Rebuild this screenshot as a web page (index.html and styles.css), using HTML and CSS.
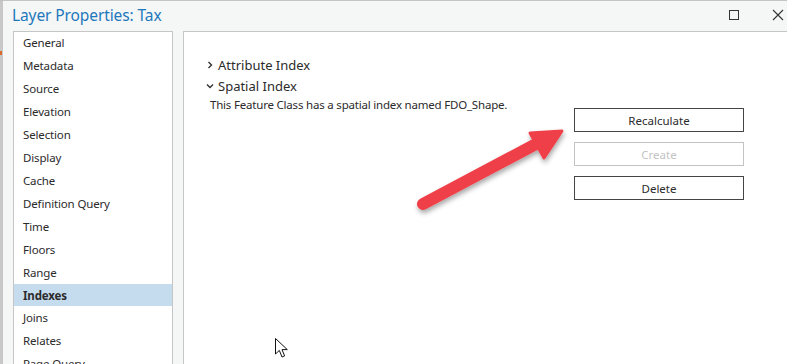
FILE: index.html
```html
<!DOCTYPE html>
<html lang="en">
<head>
    <meta charset="UTF-8">
    <title>Layer Properties: Tax</title>
    <link rel="stylesheet" href="styles.css">
</head>
<body>
    <div class="edge"><span class="edge-mark"></span></div>
    <div class="window">
        <div class="titlebar">
            <span class="title">Layer Properties: Tax</span>
            <span class="controls">
                <svg class="ctl" width="12" height="12" viewBox="0 0 12 12"><rect x="1.5" y="1.5" width="9" height="9" fill="none" stroke="#333" stroke-width="1"/></svg>
                <svg class="ctl" width="12" height="12" viewBox="0 0 12 12"><path d="M1 1L11 11M11 1L1 11" stroke="#333" stroke-width="1.1"/></svg>
            </span>
        </div>
        <div class="main">
            <ul class="pages">
                <li>General</li>
                <li>Metadata</li>
                <li>Source</li>
                <li>Elevation</li>
                <li>Selection</li>
                <li>Display</li>
                <li>Cache</li>
                <li>Definition Query</li>
                <li>Time</li>
                <li>Floors</li>
                <li>Range</li>
                <li class="active">Indexes</li>
                <li>Joins</li>
                <li>Relates</li>
                <li>Page Query</li>
            </ul>
            <div class="content">
                <div class="section">
                    <svg class="chev" width="8" height="8" viewBox="0 0 8 8"><path d="M2.5 1L5.5 4L2.5 7" fill="none" stroke="#333" stroke-width="1.4"/></svg>
                    <span>Attribute Index</span>
                </div>
                <div class="section">
                    <svg class="chev" width="8" height="8" viewBox="0 0 8 8"><path d="M1 2.5L4 5.5L7 2.5" fill="none" stroke="#333" stroke-width="1.4"/></svg>
                    <span>Spatial Index</span>
                </div>
                <div class="spatial">
                    <p class="desc">This Feature Class has a spatial index named FDO_Shape.</p>
                    <div class="buttons">
                        <button class="btn">Recalculate</button>
                        <button class="btn" disabled>Create</button>
                        <button class="btn">Delete</button>
                    </div>
                </div>
            </div>
        </div>
    </div>

    <!-- annotation arrow drawn over the dialog -->
    <svg class="arrow" width="787" height="364" viewBox="0 0 787 364">
        <defs>
            <filter id="shadow" x="-20%" y="-20%" width="140%" height="140%">
                <feDropShadow dx="1" dy="3" stdDeviation="2.5" flood-color="#000" flood-opacity="0.35"/>
            </filter>
        </defs>
        <g filter="url(#shadow)">
            <path d="M423 204L536 144" stroke="#ef4149" stroke-width="12" stroke-linecap="round"/>
            <path d="M562 131L530 133L544 158Z" fill="#ef4149" stroke="#ef4149" stroke-width="3" stroke-linejoin="round"/>
        </g>
    </svg>

    <svg class="cursor" width="14" height="21" viewBox="0 0 14 21">
        <path d="M0.5 0.5L0.5 16L4.3 12.4L7 19L9.6 17.9L7 11.6L12.3 11.6Z" fill="#fff" stroke="#111" stroke-width="1"/>
    </svg>
</body>
</html>
```

FILE: styles.css
```css
/* Dialog base */
body {
    margin: 0;
    width: 787px;
    height: 364px;
    overflow: hidden;
    display: flex;
    background: #f5f6f6;
    font-family: 'Noto Sans', 'Open Sans', sans-serif;
    color: #2b2b2b;
    position: relative;
}

.edge {
    width: 3px;
    flex-shrink: 0;
    background: #c8c8c8;
    border-top: 1px solid #c0c0c0;
    position: relative;
}

.edge-mark {
    position: absolute;
    left: 0;
    top: 50px;
    width: 2px;
    height: 4px;
    background: #d86a2c;
}

.window {
    flex: 1;
    display: flex;
    flex-direction: column;
    border-top: 1px solid #c4c4c4;
    min-width: 0;
}

/* Title bar */
.titlebar {
    height: 30px;
    display: flex;
    align-items: center;
    justify-content: space-between;
    padding-left: 9px;
}

.title {
    color: #1d78bd;
    font-size: 15.5px;
    letter-spacing: -0.1px;
    margin-top: -2px;
}

.controls {
    display: flex;
    gap: 32px;
    margin-right: 3px;
    margin-top: -2px;
}

/* Main area */
.main {
    flex: 1;
    display: flex;
    gap: 10px;
    padding-left: 10px;
    min-height: 0;
}

.pages {
    list-style: none;
    margin: 0;
    padding: 0;
    width: 158px;
    background: #fff;
    border: 1px solid #c6c6c6;
    border-bottom: none;
    flex-shrink: 0;
}

.pages li {
    height: 23px;
    line-height: 21px;
    padding-left: 9px;
    font-size: 11.5px;
    letter-spacing: -0.15px;
}

.pages .active {
    background: #c5dcee;
    font-weight: bold;
    line-height: 23px;
    height: 22px;
    margin-top: -1px;
    margin-bottom: 1px;
}

.content {
    flex: 1;
    background: #fff;
    border-top: 1px solid #c6c6c6;
    border-left: 1px solid #c6c6c6;
    padding: 22px 0 0 22px;
}

.section {
    display: flex;
    align-items: center;
    gap: 4px;
    height: 21px;
    font-size: 13px;
    color: #2b2b2b;
}

.chev {
    flex-shrink: 0;
}

.spatial {
    display: flex;
}

.desc {
    margin: 0;
    padding-left: 4px;
    font-size: 11.5px;
    letter-spacing: -0.2px;
    line-height: 18px;
    width: 364px;
    flex-shrink: 0;
}

.buttons {
    display: flex;
    flex-direction: column;
    gap: 10px;
    margin-top: 12px;
}

.btn {
    width: 170px;
    height: 24px;
    background: #fff;
    border: 1px solid #454545;
    font-family: inherit;
    font-size: 11.5px;
    color: #2b2b2b;
    padding: 0;
}

.btn:disabled {
    border-color: #c3c3c3;
    color: #c3c3c3;
}

/* Overlays */
.arrow {
    position: absolute;
    left: 0;
    top: 0;
}

.cursor {
    position: absolute;
    left: 275px;
    top: 338px;
}
```
